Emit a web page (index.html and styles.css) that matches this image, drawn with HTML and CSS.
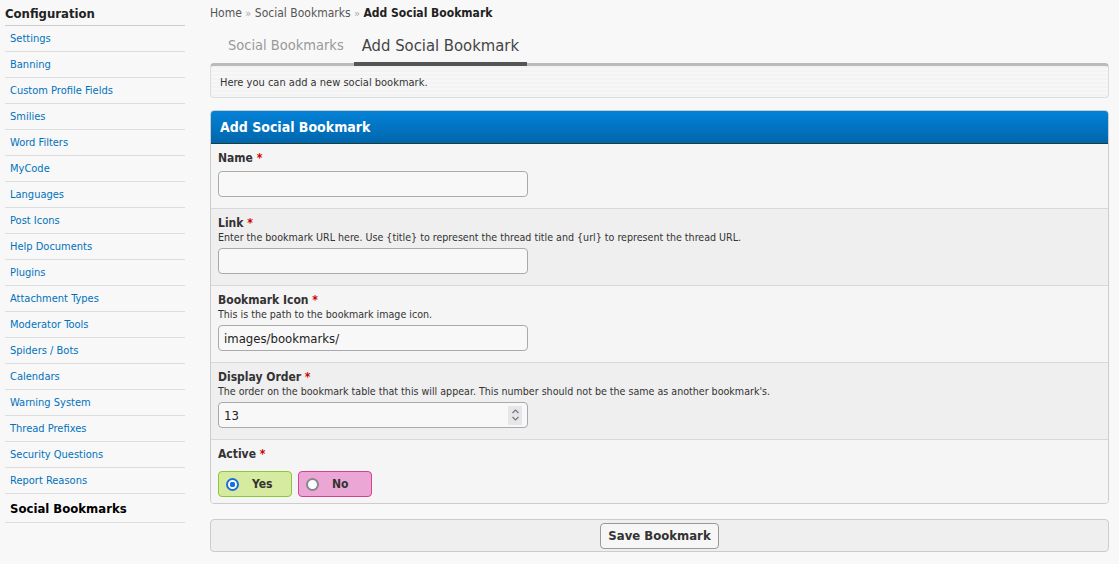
FILE: index.html
```
<!DOCTYPE html>
<html lang="en">
<head>
  <meta charset="UTF-8" />
  <title>Add Social Bookmark</title>
  <link rel="stylesheet" href="styles.css">
</head>
<body>

  <div class="page">
    <div class="sidebar">
      <h3 class="side-title">Configuration</h3>
      <ul class="side-menu">
        <li><a href="#">Settings</a></li>
        <li><a href="#">Banning</a></li>
        <li><a href="#">Custom Profile Fields</a></li>
        <li><a href="#">Smilies</a></li>
        <li><a href="#">Word Filters</a></li>
        <li><a href="#">MyCode</a></li>
        <li><a href="#">Languages</a></li>
        <li><a href="#">Post Icons</a></li>
        <li><a href="#">Help Documents</a></li>
        <li><a href="#">Plugins</a></li>
        <li><a href="#">Attachment Types</a></li>
        <li><a href="#">Moderator Tools</a></li>
        <li><a href="#">Spiders / Bots</a></li>
        <li><a href="#">Calendars</a></li>
        <li><a href="#">Warning System</a></li>
        <li><a href="#">Thread Prefixes</a></li>
        <li><a href="#">Security Questions</a></li>
        <li><a href="#">Report Reasons</a></li>
        <li class="active"><a href="#">Social Bookmarks</a></li>
      </ul>
    </div>

    <div class="content">
      <div class="breadcrumb">
        <a href="#">Home</a> <span class="sep">&raquo;</span>
        <a href="#">Social Bookmarks</a> <span class="sep">&raquo;</span>
        <b>Add Social Bookmark</b>
      </div>

      <div class="tabs">
        <a href="#" class="tab">Social Bookmarks</a>
        <a href="#" class="tab current">Add Social Bookmark</a>
      </div>

      <div class="tab-desc">Here you can add a new social bookmark.</div>

      <div class="form-box">
        <div class="form-head">Add Social Bookmark</div>

        <div class="form-row">
          <label>Name <em>*</em></label>
          <input type="text" class="text-input">
        </div>

        <div class="form-row alt">
          <label>Link <em>*</em></label>
          <div class="desc">Enter the bookmark URL here. Use {title} to represent the thread title and {url} to represent the thread URL.</div>
          <input type="text" class="text-input">
        </div>

        <div class="form-row">
          <label>Bookmark Icon <em>*</em></label>
          <div class="desc">This is the path to the bookmark image icon.</div>
          <input type="text" class="text-input" value="images/bookmarks/">
        </div>

        <div class="form-row alt">
          <label>Display Order <em>*</em></label>
          <div class="desc">The order on the bookmark table that this will appear. This number should not be the same as another bookmark's.</div>
          <div class="text-input num-input">
            <span>13</span>
            <span class="spin">
              <svg width="9" height="14" viewBox="0 0 9 14"><path d="M1.5 5 L4.5 2 L7.5 5 M1.5 9 L4.5 12 L7.5 9" fill="none" stroke="#777" stroke-width="1.2"/></svg>
            </span>
          </div>
        </div>

        <div class="form-row last">
          <label>Active <em>*</em></label>
          <div class="radios">
            <span class="radio yes"><span class="dot on"></span>Yes</span>
            <span class="radio no"><span class="dot"></span>No</span>
          </div>
        </div>
      </div>

      <div class="buttons">
        <button class="save-btn">Save Bookmark</button>
      </div>
    </div>
  </div>

</body>
</html>
```

FILE: styles.css
```
* {
  margin: 0;
  padding: 0;
  box-sizing: border-box;
}

html, body {
  height: 100%;
  background: #f8f8f8;
  font-family: "DejaVu Sans Condensed", "DejaVu Sans", sans-serif;
  color: #333;
  overflow: hidden;
}

a {
  text-decoration: none;
}

.page {
  display: flex;
  padding: 0 10px 0 5px;
  gap: 25px;
}

/* sidebar */
.sidebar {
  width: 180px;
  flex-shrink: 0;
  padding-top: 1px;
}

.side-title {
  font-size: 13px;
  font-weight: bold;
  color: #222;
  height: 25px;
  line-height: 25px;
  border-bottom: 1px solid #ccc;
}

.side-menu {
  list-style: none;
}

.side-menu li {
  height: 26px;
  line-height: 26px;
  border-bottom: 1px solid #ddd;
  padding-left: 5px;
  font-size: 11px;
}

.side-menu a {
  color: #0072bc;
}

.side-menu li.active {
  height: 29px;
  line-height: 29px;
  font-size: 13px;
  font-weight: bold;
}

.side-menu li.active a {
  color: #000;
}

/* content */
.content {
  flex: 1;
}

.breadcrumb {
  font-size: 12px;
  color: #555;
  height: 27px;
  line-height: 27px;
}

.breadcrumb a {
  color: #555;
}

.breadcrumb .sep {
  color: #aaa;
  font-size: 11px;
}

.breadcrumb b {
  color: #222;
}

.tabs {
  display: flex;
  align-items: flex-end;
  padding-left: 8px;
  height: 39px;
}

.tab {
  font-size: 14.5px;
  color: #999;
  padding: 0 10px 0;
  height: 39px;
  line-height: 37px;
}

.tab.current {
  font-size: 16.5px;
  color: #444;
  border-bottom: 4px solid #555;
  padding-left: 8px;
  padding-right: 8px;
  line-height: 37px;
}

.tab-desc {
  border: 1px solid #ddd;
  border-top: 3px solid #bbb;
  border-radius: 4px;
  background: repeating-linear-gradient(to bottom, #f3f3f3 0, #f3f3f3 2px, #f7f7f7 2px, #f7f7f7 4px);
  font-size: 11px;
  color: #333;
  height: 35px;
  padding: 10px 9px 0;
  margin-top: -3px;
}

.form-box {
  margin-top: 12px;
  border: 1px solid #ccc;
  border-radius: 4px;
  overflow: hidden;
  background: #f5f5f5;
}

.form-head {
  background: linear-gradient(to bottom, #0482d8, #0066ac);
  border-bottom: 1px solid #1d3d3a;
  color: #fff;
  font-weight: bold;
  font-size: 14px;
  height: 33px;
  line-height: 33px;
  padding-left: 9px;
}

.form-row {
  padding: 7px 7px 11px;
  border-bottom: 1px solid #d8d8d8;
  background: #f5f5f5;
}

.form-row.alt {
  background: #efefef;
}

.form-row.last {
  border-bottom: none;
  padding-bottom: 6px;
}

.form-row label {
  display: block;
  font-size: 12px;
  font-weight: bold;
  color: #333;
  line-height: 15px;
}

.form-row label em {
  color: #c00;
  font-style: normal;
  font-weight: bold;
}

.desc {
  font-size: 10.6px;
  color: #333;
  line-height: 12px;
}

.text-input {
  display: block;
  width: 310px;
  height: 26px;
  margin-top: 5px;
  border: 1px solid #aaa;
  border-radius: 4px;
  background: #f8f8f8;
  font-family: inherit;
  font-size: 13px;
  color: #222;
  padding: 0 5px;
}

.num-input {
  display: flex;
  align-items: center;
  justify-content: space-between;
  padding-right: 5px;
}

.spin {
  display: flex;
  align-items: center;
  justify-content: center;
  width: 14px;
  height: 19px;
  background: #e4e6ea;
}

.radios {
  display: flex;
  gap: 6px;
  margin-top: 9px;
}

.radio {
  display: flex;
  align-items: center;
  width: 74px;
  height: 26px;
  border-radius: 4px;
  font-size: 12px;
  font-weight: bold;
  color: #333;
  padding-left: 7px;
  gap: 13px;
}

.radio.yes {
  background: #d6eba0;
  border: 1px solid #8cc63e;
}

.radio.no {
  background: #eca6d6;
  border: 1px solid #d2448e;
}

.dot {
  width: 13px;
  height: 13px;
  border-radius: 50%;
  border: 2px solid #888;
  background: #fff;
}

.dot.on {
  border: 2px solid #1a6fe0;
  background: radial-gradient(circle, #1a6fe0 0, #1a6fe0 2.5px, #fff 3px);
}

.buttons {
  margin-top: 15px;
  border: 1px solid #ccc;
  border-radius: 4px;
  background: #efefef;
  height: 33px;
  display: flex;
  align-items: center;
  justify-content: center;
}

.save-btn {
  font-family: inherit;
  font-size: 13px;
  font-weight: bold;
  color: #333;
  background: #f6f6f6;
  border: 1px solid #999;
  border-radius: 4px;
  height: 26px;
  padding: 0 7px;
}
```
